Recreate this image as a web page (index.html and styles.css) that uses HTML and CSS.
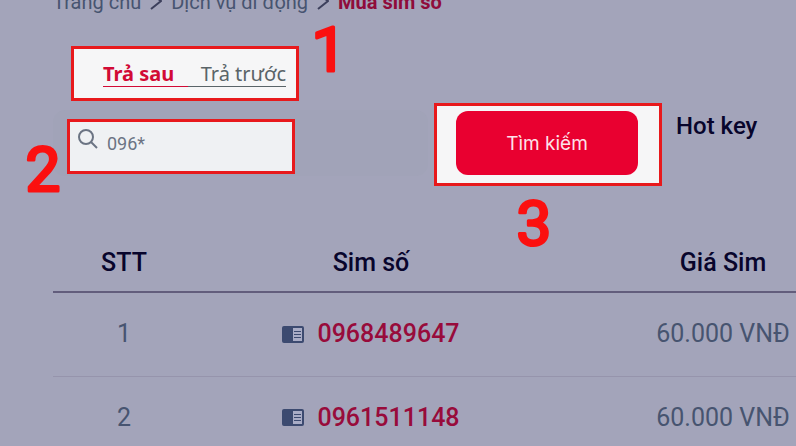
FILE: index.html
```
<!DOCTYPE html>
<html lang="vi">
<head>
<meta charset="utf-8">
<title>Mua sim số</title>
<link rel="stylesheet" href="styles.css">
</head>
<body>
<main class="page">
  <nav class="breadcrumb" aria-label="Breadcrumb">
    <a href="#">Trang chủ</a>
    <svg class="chevron" viewBox="0 0 12 16" aria-hidden="true"><path d="M1 0l10 7-10 8"/></svg>
    <a href="#">Dịch vụ di động</a>
    <svg class="chevron" viewBox="0 0 12 16" aria-hidden="true"><path d="M1 0l10 7-10 8"/></svg>
    <a class="current" href="#">Mua sim số</a>
  </nav>

  <div class="tabs highlight">
    <button class="tab active" type="button">Trả sau</button>
    <button class="tab" type="button">Trả trước</button>
  </div>

  <form class="search">
    <div class="field">
      <label class="query highlight">
        <svg class="lens" viewBox="0 0 20 20" aria-hidden="true"><circle cx="8" cy="8" r="7"/><path d="M13 13l6 6"/></svg>
        <input type="text" value="096*" aria-label="Số cần tìm">
      </label>
    </div>
    <div class="action highlight">
      <button class="submit" type="button">Tìm kiếm</button>
    </div>
    <h2>Hot key</h2>
  </form>

  <table>
    <thead>
      <tr><th class="index">STT</th><th class="number">Sim số</th><th class="price">Giá Sim</th></tr>
    </thead>
    <tbody>
      <tr>
        <td>1</td>
        <td><a class="sim" href="#"><svg class="card" viewBox="0 0 22 17" aria-hidden="true"><rect class="body" width="22" height="17" rx="2"/><rect class="sheet" x="11" y="2" width="9" height="13"/><path d="M12 5.500h7M12 8.500h7M12 11.500h7"/></svg>0968489647</a></td>
        <td class="price">60.000 VNĐ</td>
      </tr>
      <tr>
        <td>2</td>
        <td><a class="sim" href="#"><svg class="card" viewBox="0 0 22 17" aria-hidden="true"><rect class="body" width="22" height="17" rx="2"/><rect class="sheet" x="11" y="2" width="9" height="13"/><path d="M12 5.500h7M12 8.500h7M12 11.500h7"/></svg>0961511148</a></td>
        <td class="price">60.000 VNĐ</td>
      </tr>
    </tbody>
  </table>

  <svg class="marker first" viewBox="0 0 44 60"><text x="22" y="51">1</text></svg>
  <svg class="marker second" viewBox="0 0 44 60"><text x="22" y="51">2</text></svg>
  <svg class="marker third" viewBox="0 0 44 60"><text x="22" y="51">3</text></svg>
</main>
</body>
</html>
```
FILE: styles.css
```
* { box-sizing: border-box; }

body {
  margin: 0;
  background: #a3a4ba;
  color: #475470;
  font-family: Roboto, "Liberation Sans", sans-serif;
  overflow: hidden;
}

a { color: inherit; text-decoration: none; }
button, input { font: inherit; color: inherit; border: 0; background: none; padding: 0; }

.page { position: relative; padding-left: 53px; }

.highlight { border: 3px solid #e8191c; background: #f6f6f7; }

.breadcrumb {
  display: flex;
  align-items: center;
  gap: 9px;
  height: 24px;
  margin-top: -10px;
  font-size: 20px;
  line-height: 24px;
  white-space: nowrap;
}
.breadcrumb .current { color: #8f0c3b; font-weight: 700; }
.chevron { width: 12px; height: 16px; fill: none; stroke: #3c3f5c; stroke-width: 2; }

.tabs {
  display: flex;
  width: 228px;
  height: 55px;
  margin: 32px 0 0 18px;
  padding: 12px 10px 11px 29px;
  font-family: "Noto Sans", sans-serif;
  font-size: 20px;
  line-height: 24px;
}
.tab { flex: auto; color: #5a6468; text-align: right; white-space: nowrap; border-bottom: 1px solid #5a6468; }
.tab.active { color: #d20a35; font-weight: 700; text-align: left; border-color: #d20a35; }

.search { display: flex; align-items: flex-start; margin-top: 2px; }
.field {
  width: 375px;
  height: 66px;
  margin: 7px 6px 0 0;
  padding: 9px 0 0 14px;
  border-radius: 12px;
  background: #a1a3b8;
}
.query {
  display: flex;
  gap: 9px;
  width: 228px;
  height: 55px;
  padding: 7px 8px;
  background: #eff1f3;
  color: #6b7483;
}
.lens { flex: none; width: 20px; height: 20px; fill: none; stroke: #6b7483; stroke-width: 2; }
.query input { width: 100%; height: 28px; font-size: 18px; }
.action { width: 228px; height: 83px; padding: 5px 21px 8px 19px; }
.submit {
  width: 100%;
  height: 64px;
  border-radius: 12px;
  background: #e90030;
  color: #fde3ea;
  font-family: Inter, sans-serif;
  font-size: 19px;
}
h2 { margin: 7px 0 0 14px; color: #08052c; font-size: 24px; line-height: 32px; font-weight: 500; white-space: nowrap; }

table {
  width: 100%;
  margin-top: 46px;
  border-collapse: collapse;
  table-layout: fixed;
  font-size: 25px;
  line-height: 32px;
  text-align: center;
  white-space: nowrap;
}
th { height: 60px; padding: 2px 0 0; color: #08052c; font-weight: 500; border-bottom: 2px solid #625d7c; }
td { height: 84px; padding: 0; border-bottom: 1px solid #9694ac; }
.index { width: 142px; }
.number { width: 352px; }
.price { padding-left: 103px; }
.sim { display: inline-flex; align-items: center; gap: 13px; color: #980b3b; font-weight: 500; }
.card { width: 22px; height: 17px; }
.card .body { fill: #3c4a70; }
.card .sheet { fill: #a9acc6; }
.card path { stroke: #3c4a70; stroke-width: 1; }

.marker { position: absolute; width: 44px; height: 60px; overflow: visible; }
.marker text {
  font-size: 62px;
  text-anchor: middle;
  fill: #fb1010;
  stroke: #fb1010;
  stroke-width: 3;
  stroke-linejoin: round;
}
.first { left: 307px; top: 30px; }
.second { left: 21px; top: 150px; }
.third { left: 512px; top: 204px; }
```
